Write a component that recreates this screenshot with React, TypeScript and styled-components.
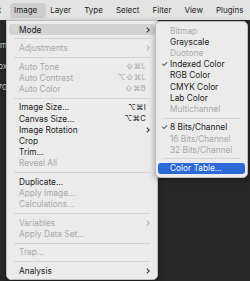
import React from "react";
import styled, { createGlobalStyle, css } from "styled-components";

const Global = createGlobalStyle`
  html, body { margin: 0; padding: 0; background: #282828; }
  body { font-family: Inter, "Noto Sans", "Liberation Sans", sans-serif; -webkit-font-smoothing: antialiased; }
  * { box-sizing: border-box; }
`;

const Page = styled.div`
  position: relative;
  width: 250px;
  height: 281px;
  overflow: hidden;
  background: #282828;
  display: flex;
  flex-direction: column;
`;

const MenuBar = styled.div`
  height: 20px;
  flex: none;
  background: #e3e3e3;
  display: flex;
  align-items: center;
  overflow: hidden;
`;

const BarItem = styled.div<{ $active?: boolean }>`
  height: 15px;
  display: flex;
  align-items: center;
  padding: 0 9px 0 4px;
  font-size: 8px;
  color: #1d1d1d;
  border-radius: 4px;
  flex: none;
  ${(p) => p.$active && css`background: #cdcdcd;`}
`;

const CutItem = styled(BarItem)`
  width: 10px;
  padding: 0;
  justify-content: flex-end;
  overflow: hidden;
  & > span { padding-right: 9px; }
`;

const Workspace = styled.div`
  flex: 1;
  display: flex;
`;

const SideStrip = styled.div`
  width: 7px;
  display: flex;
  flex-direction: column;
  align-items: flex-end;
  padding-top: 20px;
  gap: 11px;
  overflow: hidden;
  color: #cfcfcf;
  font-size: 8px;
  white-space: nowrap;
`;

const MenuPanel = styled.div<{ $left: number; $top: number; $width: number; $topRound?: boolean }>`
  position: absolute;
  left: ${(p) => p.$left}px;
  top: ${(p) => p.$top}px;
  width: ${(p) => p.$width}px;
  background: #ebebeb;
  border: 1px solid #bdbdbd;
  border-radius: ${(p) => (p.$topRound ? "5px" : "0 0 5px 5px")};
  box-shadow: 0 2px 6px rgba(0, 0, 0, 0.35);
  padding: 3px 0;
  display: flex;
  flex-direction: column;
`;

const Row = styled.div<{ $hl?: "gray" | "blue"; $dis?: boolean; $padLeft: number }>`
  height: 11.2px;
  margin: 0 2px;
  padding: 0 4px 0 ${(p) => p.$padLeft}px;
  display: flex;
  align-items: center;
  border-radius: 3px;
  font-size: 8.3px;
  white-space: nowrap;
  color: ${(p) => (p.$dis ? "#a9a9a9" : "#1b1b1b")};
  ${(p) => p.$hl === "gray" && css`background: #d3d3d3;`}
  ${(p) => p.$hl === "blue" && css`background: #2b68d8; color: #ffffff;`}
`;

const Label = styled.span`
  flex: 1;
`;

const Check = styled.span`
  width: 9px;
  margin-left: -9px;
  font-size: 8px;
`;

const Shortcut = styled.span<{ $dis?: boolean }>`
  color: ${(p) => (p.$dis ? "#a9a9a9" : "#1b1b1b")};
  font-size: 7.6px;
  margin-right: 5px;
  letter-spacing: 0.2px;
`;

const Chevron = styled.svg<{ $dis?: boolean }>`
  width: 4px;
  height: 6px;
  margin-right: 1px;
  stroke: ${(p) => (p.$dis ? "#b3b3b3" : "#3a3a3a")};
`;

const Sep = styled.div<{ $inset: number }>`
  height: 1px;
  margin: 3.15px ${(p) => p.$inset}px;
  background: #d3d3d3;
`;

type Item =
  | { sep: true }
  | { label: string; dis?: boolean; sub?: boolean; sc?: string; hl?: "gray" | "blue"; check?: boolean };

const mainItems: Item[] = [
  { label: "Mode", sub: true, hl: "gray" },
  { sep: true },
  { label: "Adjustments", dis: true, sub: true },
  { sep: true },
  { label: "Auto Tone", dis: true, sc: "⇧⌘L" },
  { label: "Auto Contrast", dis: true, sc: "⌥⇧⌘L" },
  { label: "Auto Color", dis: true, sc: "⇧⌘B" },
  { sep: true },
  { label: "Image Size...", sc: "⌥⌘I" },
  { label: "Canvas Size...", sc: "⌥⌘C" },
  { label: "Image Rotation", sub: true },
  { label: "Crop" },
  { label: "Trim..." },
  { label: "Reveal All", dis: true },
  { sep: true },
  { label: "Duplicate..." },
  { label: "Apply Image...", dis: true },
  { label: "Calculations...", dis: true },
  { sep: true },
  { label: "Variables", dis: true, sub: true },
  { label: "Apply Data Set...", dis: true },
  { sep: true },
  { label: "Trap...", dis: true },
  { sep: true },
  { label: "Analysis", sub: true },
];

const subItems: Item[] = [
  { label: "Bitmap", dis: true },
  { label: "Grayscale" },
  { label: "Duotone", dis: true },
  { label: "Indexed Color", check: true },
  { label: "RGB Color" },
  { label: "CMYK Color" },
  { label: "Lab Color" },
  { label: "Multichannel", dis: true },
  { sep: true },
  { label: "8 Bits/Channel", check: true },
  { label: "16 Bits/Channel", dis: true },
  { label: "32 Bits/Channel", dis: true },
  { sep: true },
  { label: "Color Table...", hl: "blue" },
];

function MenuList({ items, padLeft, inset }: { items: Item[]; padLeft: number; inset: number }) {
  return (
    <>
      {items.map((it, i) =>
        "sep" in it ? (
          <Sep key={i} $inset={inset} />
        ) : (
          <Row key={i} $hl={it.hl} $dis={it.dis} $padLeft={padLeft}>
            {it.check && <Check>✓</Check>}
            <Label>{it.label}</Label>
            {it.sc && <Shortcut $dis={it.dis}>{it.sc}</Shortcut>}
            {it.sub && (
              <Chevron $dis={it.dis} viewBox="0 0 4 6" fill="none" strokeWidth={1.1}>
                <path d="M0.8 0.6 L3.2 3 L0.8 5.4" />
              </Chevron>
            )}
          </Row>
        )
      )}
    </>
  );
}

export default function App() {
  return (
    <Page>
      <Global />
      <MenuBar>
        <CutItem>
          <span>Edit</span>
        </CutItem>
        <BarItem $active>Image</BarItem>
        <BarItem>Layer</BarItem>
        <BarItem>Type</BarItem>
        <BarItem>Select</BarItem>
        <BarItem>Filter</BarItem>
        <BarItem>View</BarItem>
        <BarItem>Plugins</BarItem>
      </MenuBar>
      <Workspace>
        <SideStrip>
          <span>cm</span>
          <span>px</span>
          <span>70</span>
        </SideStrip>
      </Workspace>
      <MenuPanel $left={6} $top={20} $width={152}>
        <MenuList items={mainItems} padLeft={10} inset={7} />
      </MenuPanel>
      <MenuPanel $left={155} $top={21} $width={93} $topRound>
        <MenuList items={subItems} padLeft={12} inset={7} />
      </MenuPanel>
    </Page>
  );
}
